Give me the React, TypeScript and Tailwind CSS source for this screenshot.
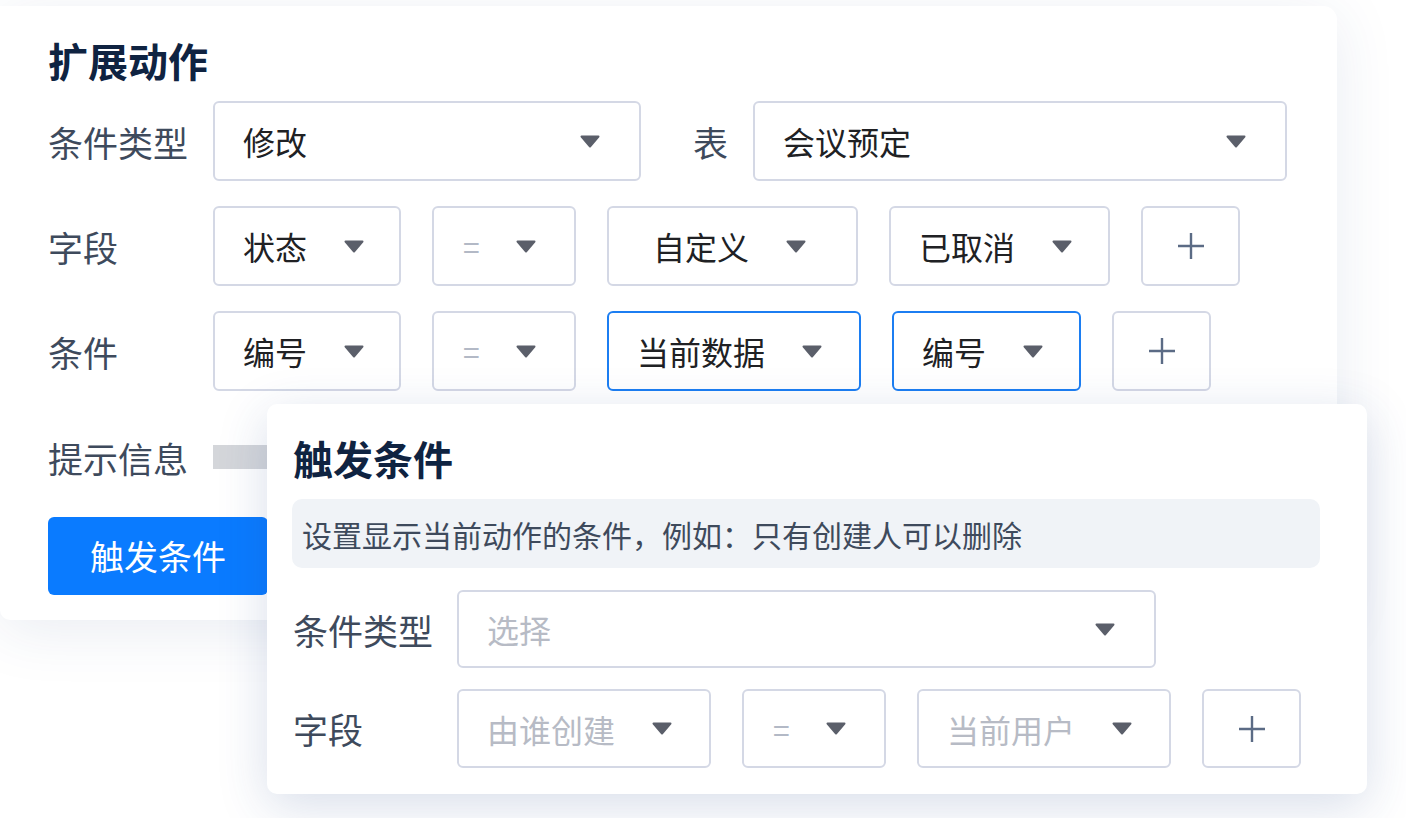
import React from 'react'

const Caret = () => (
  <svg width="20" height="13" viewBox="0 0 20 13" className="shrink-0">
    <path d="M1.5 1.5 L18.5 1.5 L10 11.5 Z" fill="#5b5f6a" stroke="#5b5f6a" strokeWidth="2" strokeLinejoin="round" />
  </svg>
)

const Plus = () => (
  <svg width="28" height="28" viewBox="0 0 28 28">
    <path d="M14 1 V27 M1 14 H27" stroke="#5b6b85" strokeWidth="2.4" />
  </svg>
)

type SelectProps = {
  text: string
  w: string
  pl?: string
  muted?: boolean
  active?: boolean
  wide?: boolean
  h?: string
}

// one select box: text, gap, caret
const Select = ({ text, w, pl = 'pl-[28px]', muted, active, wide, h = 'h-[80px]' }: SelectProps) => (
  <div
    className={
      (active ? 'border-[#1c7ef2] ' : 'border-[#d4d8e5] ') +
      (wide ? 'justify-between pr-[39px] ' : 'gap-[37px] ') +
      w + ' ' + pl + ' ' + h +
      ' flex shrink-0 items-center rounded-[6px] border-2 bg-white'
    }
  >
    <span className={(muted ? 'text-[#b7bbc5]' : 'text-[#202124]') + ' text-[32px] leading-none'}>{text}</span>
    <Caret />
  </div>
)

const EqSelect = ({ h = 'h-[80px]' }: { h?: string }) => (
  <div className={h + ' flex w-[144px] shrink-0 items-center gap-[36px] rounded-[6px] border-2 border-[#d4d8e5] bg-white pl-[29px]'}>
    <span className="text-[30px] leading-none text-[#b3b9c6]">=</span>
    <Caret />
  </div>
)

const PlusBox = ({ h = 'h-[80px]' }: { h?: string }) => (
  <div className={h + ' flex w-[99px] shrink-0 items-center justify-center rounded-[6px] border-2 border-[#d4d8e5] bg-white'}>
    <Plus />
  </div>
)

const Label = ({ children, w = 'w-[165px]' }: { children: React.ReactNode; w?: string }) => (
  <span className={w + ' shrink-0 text-[35px] leading-none text-[#3e4a5c]'}>{children}</span>
)

export default function App() {
  return (
    <div className="relative h-[818px] w-[1406px] overflow-hidden bg-white font-['Noto_Sans_CJK_SC','Noto_Sans',sans-serif]">
      <div className="pt-[6px]">
        {/* 扩展动作 */}
        <section className="h-[614px] w-[1337px] rounded-r-[14px] rounded-bl-[10px] bg-white pl-[48px] pt-[34px] shadow-[0_10px_60px_rgba(40,70,130,0.10)]">
          <h1 className="text-[40px] font-bold leading-none text-[#0f2341]">扩展动作</h1>

          <div className="mt-[21px] flex flex-col gap-[25px]">
            <div className="flex items-center">
              <Label>条件类型</Label>
              <Select text="修改" w="w-[428px]" wide />
              <span className="ml-[52px] mr-[25px] text-[35px] leading-none text-[#3e4a5c]">表</span>
              <Select text="会议预定" w="w-[534px]" wide />
            </div>

            <div className="flex items-center gap-[31px]">
              <Label w="w-[134px]">字段</Label>
              <Select text="状态" w="w-[188px]" />
              <EqSelect />
              <Select text="自定义" w="w-[251px]" pl="pl-[44px]" />
              <Select text="已取消" w="w-[221px]" />
              <PlusBox />
            </div>

            <div className="flex items-center gap-[31px]">
              <Label w="w-[134px]">条件</Label>
              <Select text="编号" w="w-[188px]" />
              <EqSelect />
              <Select text="当前数据" w="w-[254px]" active />
              <Select text="编号" w="w-[189px]" active />
              <PlusBox />
            </div>
          </div>

          <div className="mt-[42px] flex h-[48px] items-center">
            <Label>提示信息</Label>
            <div className="h-[24px] w-[600px] bg-[#d4d6da]" />
          </div>

          <button className="mt-[36px] flex h-[78px] w-[220px] items-center justify-center rounded-[6px] bg-[#0a7bff] text-[34px] leading-none text-white">
            触发条件
          </button>
        </section>
      </div>

      {/* 触发条件 popup */}
      <div className="absolute left-[267px] top-[404px] h-[390px] w-[1100px] rounded-[10px] bg-white px-[25px] pt-[34px] shadow-[0_12px_50px_rgba(40,70,140,0.18)]">
        <h2 className="pl-[1px] text-[40px] font-bold leading-none text-[#0f2341]">触发条件</h2>

        <div className="mt-[21px] flex h-[69px] w-[1028px] items-center rounded-[10px] bg-[#f0f3f7] pl-[10px]">
          <span className="text-[30px] leading-none text-[#3e4a5c]">设置显示当前动作的条件，例如：只有创建人可以删除</span>
        </div>

        <div className="mt-[22px] flex items-center pl-[1px]">
          <Label w="w-[164px]">条件类型</Label>
          <Select text="选择" w="w-[699px]" h="h-[78px]" muted wide />
        </div>

        <div className="mt-[21px] flex items-center gap-[31px] pl-[1px]">
          <Label w="w-[133px]">字段</Label>
          <Select text="由谁创建" w="w-[254px]" h="h-[79px]" muted />
          <EqSelect h="h-[79px]" />
          <Select text="当前用户" w="w-[254px]" h="h-[79px]" muted />
          <PlusBox h="h-[79px]" />
        </div>
      </div>
    </div>
  )
}
